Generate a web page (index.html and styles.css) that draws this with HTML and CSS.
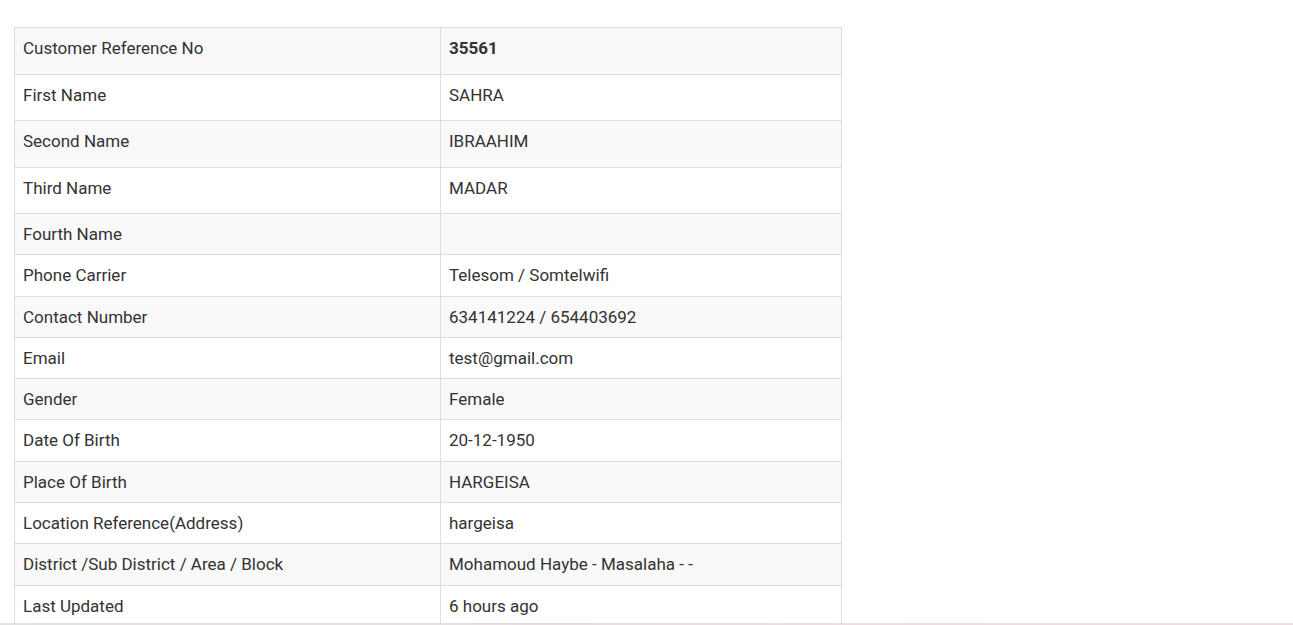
FILE: index.html
```html
<!DOCTYPE html>
<html lang="en">
<head>
<meta charset="utf-8">
<title>Customer Details</title>
<link rel="stylesheet" href="styles.css">
</head>
<body>
<div class="page">
  <table class="details">
    <tbody>
      <tr class="tall"><td class="label">Customer Reference No</td><td class="value"><strong>35561</strong></td></tr>
      <tr class="tall"><td class="label">First Name</td><td class="value">SAHRA</td></tr>
      <tr class="tall"><td class="label">Second Name</td><td class="value">IBRAAHIM</td></tr>
      <tr class="tall"><td class="label">Third Name</td><td class="value">MADAR</td></tr>
      <tr><td class="label">Fourth Name</td><td class="value"></td></tr>
      <tr><td class="label">Phone Carrier</td><td class="value">Telesom / Somtelwifi</td></tr>
      <tr><td class="label">Contact Number</td><td class="value">634141224 / 654403692</td></tr>
      <tr><td class="label">Email</td><td class="value">test@gmail.com</td></tr>
      <tr><td class="label">Gender</td><td class="value">Female</td></tr>
      <tr><td class="label">Date Of Birth</td><td class="value">20-12-1950</td></tr>
      <tr><td class="label">Place Of Birth</td><td class="value">HARGEISA</td></tr>
      <tr><td class="label">Location Reference(Address)</td><td class="value">hargeisa</td></tr>
      <tr><td class="label">District /Sub District / Area / Block</td><td class="value">Mohamoud Haybe - Masalaha - -</td></tr>
      <tr><td class="label">Last Updated</td><td class="value">6 hours ago</td></tr>
    </tbody>
  </table>
</div>
<div class="bottom-edge"></div>
</body>
</html>
```

FILE: styles.css
```css
html, body {
  margin: 0;
  padding: 0;
  background: #ffffff;
}

body {
  font-family: Roboto, "Liberation Sans", sans-serif;
  font-size: 17px;
  color: #333333;
}

.page {
  padding: 27px 0 0 14px;
}

.details {
  border-collapse: collapse;
  width: 828px;
  table-layout: fixed;
}

.details td {
  border: 1px solid #dddddd;
  padding: 8px 8px 8px 8px;
  line-height: 24.3px;
  vertical-align: top;
  height: 24.3px;
  box-sizing: content-box;
}

.details td.label {
  width: 409px;
}

.details td.value {
  width: auto;
}

.details tr:nth-child(odd) td {
  background: #f9f9f9;
}

.details tr.tall td {
  height: 29.5px;
}

.details strong {
  font-weight: 700;
}

.bottom-edge {
  position: fixed;
  left: 0;
  right: 0;
  bottom: 0;
  height: 2px;
  background: linear-gradient(to right, #e3e1e3 0%, #e6dde2 45%, #f0dbe4 70%, #efdbe3 100%);
}
```
